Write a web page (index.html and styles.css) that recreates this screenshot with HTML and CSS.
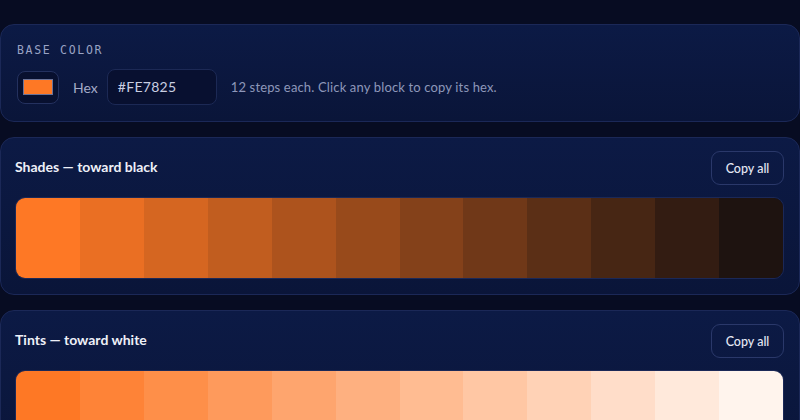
FILE: index.html
```html
<!DOCTYPE html>
<html>
<head>
<meta charset="utf-8">
<link rel="stylesheet" href="styles.css">
</head>
<body>
<main class="page">
  <section class="card base">
    <div class="label">BASE COLOR</div>
    <div class="base-row">
      <button class="picker"><span class="picker-chip"></span></button>
      <span class="hex-label">Hex</span>
      <div class="hex-input">#FE7825</div>
      <span class="hint">12 steps each. Click any block to copy its hex.</span>
    </div>
  </section>

  <section class="card scale">
    <div class="scale-head">
      <h2 class="scale-title">Shades — toward black</h2>
      <button class="copy-btn">Copy all</button>
    </div>
    <div class="strip">
      <div class="block" style="background:#fe7825"></div>
      <div class="block" style="background:#ea6f23"></div>
      <div class="block" style="background:#d56621"></div>
      <div class="block" style="background:#c15d1f"></div>
      <div class="block" style="background:#ad531d"></div>
      <div class="block" style="background:#984a1b"></div>
      <div class="block" style="background:#84411a"></div>
      <div class="block" style="background:#703818"></div>
      <div class="block" style="background:#5b2f16"></div>
      <div class="block" style="background:#472614"></div>
      <div class="block" style="background:#331c12"></div>
      <div class="block" style="background:#1e1310"></div>
    </div>
  </section>

  <section class="card scale">
    <div class="scale-head">
      <h2 class="scale-title">Tints — toward white</h2>
      <button class="copy-btn">Copy all</button>
    </div>
    <div class="strip">
      <div class="block" style="background:#fe7825"></div>
      <div class="block" style="background:#fe8337"></div>
      <div class="block" style="background:#fe8f49"></div>
      <div class="block" style="background:#fe9a5c"></div>
      <div class="block" style="background:#fea56e"></div>
      <div class="block" style="background:#feb080"></div>
      <div class="block" style="background:#ffbc92"></div>
      <div class="block" style="background:#ffc7a4"></div>
      <div class="block" style="background:#ffd2b6"></div>
      <div class="block" style="background:#ffddc9"></div>
      <div class="block" style="background:#ffe9db"></div>
      <div class="block" style="background:#fff4ed"></div>
    </div>
  </section>
</main>
</body>
</html>
```

FILE: styles.css
```css
* { box-sizing: border-box; }

html, body {
  margin: 0;
  padding: 0;
  background: #070c22;
  height: 100%;
  overflow: hidden;
}

body {
  font-family: Lato, "Noto Sans", sans-serif;
  color: #e8ebf6;
}

.page {
  display: flex;
  flex-direction: column;
  gap: 15px;
  padding-top: 24px;
}

.card {
  border: 1px solid #1b2857;
  border-radius: 14px;
  background: linear-gradient(180deg, #0c1a45 0%, #0a1539 100%);
}

.base {
  padding: 18px 16px 16px 16px;
}

.label {
  font-family: "DejaVu Sans Mono", monospace;
  font-size: 11.5px;
  letter-spacing: 1.7px;
  color: #9aa3c4;
  line-height: 14px;
  margin-bottom: 12px;
}

.base-row {
  display: flex;
  align-items: center;
}

.picker {
  width: 42px;
  height: 33px;
  padding: 0;
  border: 1px solid #24315f;
  border-radius: 8px;
  background: #08102f;
  display: flex;
  align-items: center;
  justify-content: center;
  margin-right: 14px;
}

.picker-chip {
  display: block;
  width: 30px;
  height: 16px;
  background: #fe7825;
  border: 1px solid #6b7398;
}

.hex-label {
  font-size: 14px;
  color: #a4abc8;
  margin-right: 9px;
}

.hex-input {
  width: 110px;
  height: 36px;
  border: 1px solid #1c2955;
  border-radius: 8px;
  background: #081030;
  color: #c9cee2;
  font-size: 14px;
  line-height: 34px;
  padding-left: 10px;
  letter-spacing: 0.3px;
  margin-right: 14px;
}

.hint {
  font-size: 13px;
  letter-spacing: 0.15px;
  color: #8e97ba;
}

.scale {
  padding: 13px 15px 15px 14px;
}

.scale-head {
  display: flex;
  align-items: center;
  justify-content: space-between;
  margin-bottom: 12px;
}

.scale-title {
  margin: 0 0 3px 0;
  font-size: 14px;
  font-weight: 700;
  color: #eef0f8;
}

.copy-btn {
  width: 73px;
  height: 34px;
  border: 1px solid #2a386a;
  border-radius: 9px;
  background: transparent;
  color: #e4e7f4;
  font-family: Lato, "Noto Sans", sans-serif;
  font-size: 12.5px;
  font-weight: 500;
  padding: 0;
}

.strip {
  display: grid;
  grid-template-columns: repeat(12, 1fr);
  height: 82px;
  border-radius: 10px;
  overflow: hidden;
  border: 1px solid #1b2857;
}

.block {
  height: 100%;
}
```
